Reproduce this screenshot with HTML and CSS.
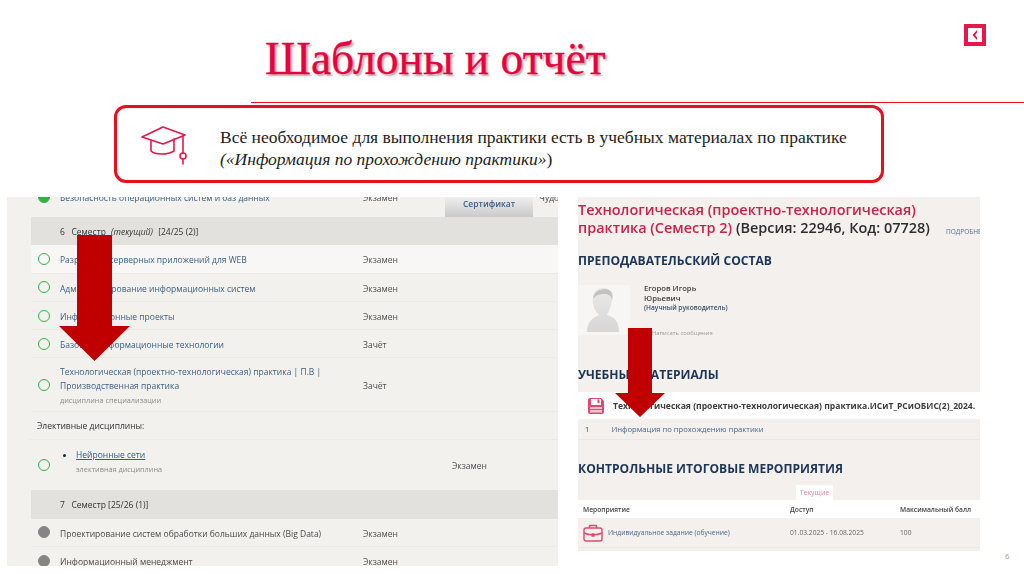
FILE: index.html
```html
<!DOCTYPE html>
<html lang="ru">
<head>
<meta charset="utf-8">
<title>Шаблоны и отчёт</title>
<link rel="stylesheet" href="styles.css">
</head>
<body>
<main class="slide">
  <h1 class="title">Шаблоны и отчёт</h1>
  <div class="rule"></div>
  <a class="back"><svg width="14" height="14" viewBox="0 0 14 14"><path d="M9 2 4.5 7 9 12V9.6L7.2 7 9 4.4Z" fill="#e6174a"/></svg></a>

  <section class="callout">
    <svg class="cap" width="46" height="40" viewBox="0 0 46 40" fill="none" stroke="#e6174a" stroke-width="1.6" stroke-linejoin="round" stroke-linecap="round">
      <path d="M1 11 22 1 44 9 22 18Z"/>
      <path d="M10 15V25C14 29 27 29 33 25V13"/>
      <path d="M42 10V27"/>
      <circle cx="42" cy="30" r="3"/>
      <path d="M42 33V38"/>
    </svg>
    <p class="callout-text">Всё необходимое для выполнения практики есть в учебных материалах по практике<br><i>(«Информация по прохождению практики»</i>)</p>
  </section>

  <section class="panel left">
    <div class="row first"><span class="dot solid"></span><span class="name">Безопасность операционных систем и баз данных</span><span class="kind">Экзамен</span><span class="cert">Сертификат</span><span class="extra">Чудо</span></div>
    <div class="sem">6 &nbsp; Семестр <i>(текущий)</i> [24/25 (2)]</div>
    <div class="row hi"><span class="dot"></span><span class="name">Разработка серверных приложений для WEB</span><span class="kind">Экзамен</span></div>
    <div class="row"><span class="dot"></span><span class="name">Администрирование информационных систем</span><span class="kind">Экзамен</span></div>
    <div class="row"><span class="dot"></span><span class="name">Информационные проекты</span><span class="kind">Экзамен</span></div>
    <div class="row"><span class="dot"></span><span class="name">Базовые информационные технологии</span><span class="kind">Зачёт</span></div>
    <div class="row tall"><span class="dot"></span>
      <div class="name-block tech"><span class="name">Технологическая (проектно-технологическая) практика | П.В |<br>Производственная практика</span><small>дисциплина специализации</small></div>
      <span class="kind">Зачёт</span></div>
    <div class="elective">Элективные дисциплины:</div>
    <div class="row neuro"><span class="dot"></span>
      <div class="neuro-block"><span class="bullet"></span><div class="name-block"><u class="name">Нейронные сети</u><small>элективная дисциплина</small></div></div>
      <span class="kind">Экзамен</span></div>
    <div class="sem">7 &nbsp; Семестр [25/26 (1)]</div>
    <div class="row"><span class="dot gray"></span><span class="name dark">Проектирование систем обработки больших данных (Big Data)</span><span class="kind">Экзамен</span></div>
    <div class="row"><span class="dot gray"></span><span class="name dark">Информационный менеджмент</span><span class="kind">Экзамен</span></div>
  </section>

  <section class="panel right">
    <h2 class="course"><span class="crimson">Технологическая (проектно-технологическая)<br>практика (Семестр 2)</span> (Версия: 22946, Код: 07728)<span class="more">ПОДРОБНЕЕ</span></h2>
    <h3 class="head">ПРЕПОДАВАТЕЛЬСКИЙ СОСТАВ</h3>
    <div class="teacher">
      <div class="avatar"><svg width="52" height="50" viewBox="0 0 52 50"><defs><linearGradient id="bust" x1="0" y1="0" x2="0" y2="1"><stop offset="0" stop-color="#e9e9e9"/><stop offset="1" stop-color="#d6d6d6"/></linearGradient></defs><rect width="52" height="50" fill="#f8f6f4"/><path d="M9 47C9 37 14 33 21 30 17 26 14 20 15 12 16 5 20 3 26 3 33 3 35 8 34 15 33 21 31 26 29 30 36 32 41 36 41 47Z" fill="url(#bust)"/><path d="M15 14C16 6 22 4 27 4 33 4 36 9 34 15 33 10 30 9 26 9 22 9 18 10 15 14Z" fill="#c2c2c2"/></svg></div>
      <div class="person"><div>Егоров Игорь</div><div>Юрьевич</div><div class="role">(Научный руководитель)</div><div class="write">Написать сообщение</div></div>
    </div>
    <h3 class="head materials">УЧЕБНЫЕ МАТЕРИАЛЫ</h3>
    <div class="material">
      <svg width="18" height="18" viewBox="0 0 18 18"><path d="M1 3Q1 1 3 1H14L17 4V15Q17 17 15 17H3Q1 17 1 15Z" fill="#e2486f"/><rect x="4" y="2" width="10" height="6" fill="#fff"/><rect x="10.5" y="2.5" width="2" height="3.5" fill="#e2486f"/><rect x="3" y="10" width="12" height="5.5" fill="#f5c3d0"/><rect x="3" y="12" width="12" height="1" fill="#e2486f"/></svg>
      <span>Технологическая (проектно-технологическая) практика.ИСиТ_РСиОБИС(2)_2024.</span>
    </div>
    <div class="item"><span>1</span><span class="link">Информация по прохождению практики</span></div>
    <h3 class="head control">КОНТРОЛЬНЫЕ ИТОГОВЫЕ МЕРОПРИЯТИЯ</h3>
    <div class="tab">Текущие</div>
    <div class="grid th"><span>Мероприятие</span><span>Доступ</span><span>Максимальный балл</span></div>
    <div class="grid td">
      <span class="task"><svg width="20" height="18" viewBox="0 0 20 18" fill="none" stroke="#e2486f" stroke-width="1.4" stroke-linejoin="round"><rect x="1" y="4" width="18" height="13" rx="2"/><path d="M6.5 4V1.5H13.5V4M1 9C6 11.500 14 11.500 19 9M9 10H11V12H9Z"/></svg><span class="link">Индивидуальное задание (обучение)</span></span>
      <span>01.03.2025 - 16.08.2025</span><span>100</span>
    </div>
  </section>

  <svg class="arrow arrow-a" width="71" height="126" viewBox="0 0 71 126"><path d="M18 0H53V91H71L35.500 126 0 91H18Z" fill="#c00000"/></svg>
  <svg class="arrow arrow-b" width="50" height="89" viewBox="0 0 50 89"><path d="M13 0H37V65H50L25 89 0 65H13Z" fill="#c00000"/></svg>

  <span class="page">6</span>
</main>
</body>
</html>
```
FILE: styles.css
```css
* { box-sizing: border-box; }
html, body { margin: 0; padding: 0; background: #fff; }
.slide { position: relative; width: 1024px; height: 574px; overflow: hidden; background: #fff; }

.title { position: absolute; left: 265px; top: 35px; margin: 0; font: 400 45.500px/48px "Liberation Serif", serif; color: #e8003f; -webkit-text-stroke: .3px #e8003f; text-shadow: 2px 2px 2px rgba(90,60,60,.45); white-space: nowrap; }
.rule { position: absolute; left: 251px; right: 0; top: 102px; height: 1px; background: #e8171f; }
.back { position: absolute; left: 964px; top: 24px; width: 22px; height: 22px; border: 4px solid #e6174a; display: flex; align-items: center; justify-content: center; }

.callout { position: absolute; left: 114px; top: 105px; width: 770px; height: 78px; border: 3px solid #e8101c; border-radius: 12px; background: #fff; display: flex; align-items: center; padding-left: 24px; z-index: 2; }
.cap { flex: none; margin-top: 4px; }
.callout-text { margin: 8px 0 0 33px; font: 400 17.500px/22px "Liberation Serif", serif; color: #222; white-space: nowrap; }

.panel { position: absolute; overflow: hidden; filter: blur(.35px); font-family: "Open Sans", sans-serif; color: #4a4a4a; }
.left { left: 7px; top: 197px; width: 551px; height: 369px; padding-left: 24px; background: #f2f1ee; font-size: 8.500px; }

.row { position: relative; height: 28.300px; padding-top: 2px; display: flex; align-items: center; border-bottom: 1px solid #eaeae6; }
.row.first { margin-top: -14px; height: 34px; padding: 0 0 6px; border: 0; }
.row.hi { background: #f8f7f5; }
.row.tall { height: 54px; }
.row.neuro { height: 50px; padding-top: 0; border: 0; }
.row > .dot { margin-top: -2px; }
.row.first > .dot, .row.neuro > .dot { margin-top: 0; }
.dot { flex: none; width: 12px; height: 12px; margin-left: 7px; border: 1.700px solid #2fb344; border-radius: 50%; }
.dot.solid { background: #2fb344; }
.dot.gray { background: #858585; border-color: #858585; }
.name { flex: none; width: 303px; margin-left: 10px; color: #3b6185; white-space: nowrap; }
.name.dark { color: #4a4a4a; }
.kind { color: #4f4f4f; }
.name-block { flex: none; width: 303px; margin-left: 10px; display: flex; flex-direction: column; }
.name-block.tech { margin-bottom: 2px; }
.name-block .name { margin: 0; line-height: 14px; }
small { margin-top: 2px; font-size: 7.300px; line-height: 10px; color: #8a8a8a; }
.cert { position: absolute; left: 414px; top: 14px; width: 88px; height: 20px; padding-top: 0; text-align: center; line-height: 13px; font-weight: 600; color: #3b6185; background: linear-gradient(#efefef, #c9c9c9); }
.extra { position: absolute; left: 508px; top: 9px; }
.sem { height: 28.300px; display: flex; align-items: center; padding-left: 29px; background: #e2e1dd; color: #333; white-space: pre; }
.sem i { margin: 0 3px; }
.elective { height: 28px; margin-left: -2px; padding-left: 8px; display: flex; align-items: center; color: #333; border-bottom: 1px solid #eaeae6; }
.neuro-block { flex: none; width: 389px; margin: 0 0 9px 13px; display: flex; }
.neuro-block .name-block { margin-left: 10px; width: auto; }
.bullet { flex: none; width: 3px; height: 3px; margin-top: 6px; border-radius: 50%; background: #223; }
.neuro-block u.name { color: #2d5f8f; }

.right { left: 578px; top: 197px; width: 402px; height: 354px; background: #f3f0ed; }
.course { position: relative; margin: 0; padding-top: 4px; width: 402px; font: 600 14.450px/18px "Open Sans", sans-serif; color: #2e2e2e; white-space: nowrap; }
.crimson { color: #c9234a; }
.more { position: absolute; left: 368px; top: 30px; font-size: 6.500px; line-height: 9px; font-weight: 400; color: #54708c; white-space: nowrap; }
.head { margin: 0; font: 700 12.100px/16px "Open Sans", sans-serif; color: #1c3557; white-space: nowrap; }
.course + .head { margin-top: 16px; }
.teacher { display: flex; margin-top: 16px; height: 50px; }
.avatar { flex: none; width: 52px; height: 50px; }
.person { margin: -2px 0 0 14px; font-size: 7.700px; line-height: 10px; color: #444; font-weight: 600; }
.role { font-size: 6.600px; color: #3a4f68; }
.write { margin: 15px 0 0 8px; font-size: 5.800px; font-weight: 400; color: #9a9a9a; }
.materials { margin-top: 32px; }
.material { display: flex; align-items: center; gap: 8px; height: 27px; margin-top: 9px; padding-left: 9px; background: #fff; font-size: 8.600px; font-weight: 700; color: #3d3d3d; white-space: nowrap; }
.material svg { flex: none; }
.item { display: flex; height: 21px; align-items: center; padding-left: 7px; gap: 22px; font-size: 7.650px; border-bottom: 1px solid #ebe8e4; }
.link { color: #47678a; }
.control { margin-top: 21px; }
.tab { width: 37px; height: 15px; margin: 8px 0 0 218px; background: #fff; color: #e08aa0; font-size: 7px; line-height: 15px; text-align: center; }
.grid { display: grid; grid-template-columns: 207px 110px 1fr; align-items: center; padding-left: 5px; font-size: 6.700px; white-space: nowrap; }
.th { height: 18px; background: #fff; font-weight: 600; color: #444; }
.td { height: 30px; color: #666; border-bottom: 1px solid #ebe8e4; }
.task { display: flex; align-items: center; gap: 5px; }

.arrow { position: absolute; z-index: 3; }
.arrow-a { left: 59px; top: 235px; }
.arrow-b { left: 615px; top: 328px; }
.page { position: absolute; left: 1005px; top: 551px; font: 400 8px/11px "Liberation Sans", sans-serif; color: #a8a8a8; }
```
